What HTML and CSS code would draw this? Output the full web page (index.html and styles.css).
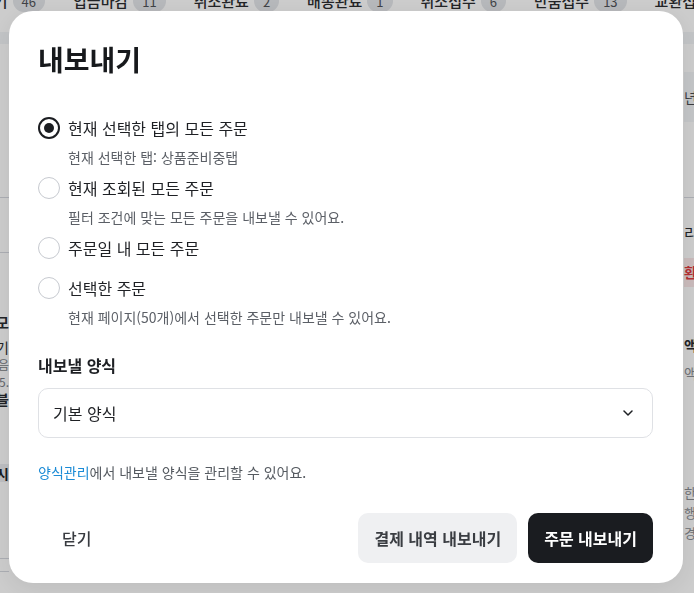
FILE: index.html
```html
<!DOCTYPE html>
<html lang="ko">
<head>
<meta charset="utf-8">
<title>내보내기</title>
<link rel="stylesheet" href="styles.css">
</head>
<body>
<div class="page">
  <nav class="tabs">
    <div class="tab"><span class="tab-name">대기</span><span class="count">46</span></div>
    <div class="tab"><span class="tab-name">입금마감</span><span class="count">11</span></div>
    <div class="tab"><span class="tab-name">취소완료</span><span class="count">2</span></div>
    <div class="tab"><span class="tab-name">배송완료</span><span class="count">1</span></div>
    <div class="tab"><span class="tab-name">취소접수</span><span class="count">6</span></div>
    <div class="tab"><span class="tab-name">반품접수</span><span class="count">13</span></div>
    <div class="tab"><span class="tab-name">교환접수</span><span class="count">3</span></div>
  </nav>
  <div class="toolbar"></div>
  <div class="layout">
    <aside class="side side-left">
      <div class="row row-a"></div>
      <div class="row row-b"></div>
      <div class="left-lines">
        <div class="l-text l-bold">모</div>
        <div class="l-text l-big">기</div>
        <div class="l-text l-gray">음</div>
        <div class="l-text l-gray">25.</div>
        <div class="l-text l-dark">블</div>
      </div>
      <div class="l-band">시</div>
      <div class="l-rule l-rule-1"></div>
      <div class="l-rule l-rule-2"></div>
    </aside>
    <main class="center"></main>
    <aside class="side side-right">
      <div class="r-row r-top"></div>
      <div class="r-row r-band">년도</div>
      <div class="r-row r-plain"></div>
      <div class="r-row r-gap"></div>
      <div class="r-row r-text">리</div>
      <div class="r-row r-pink">환</div>
      <div class="r-row r-space"></div>
      <div class="r-row r-bold">액</div>
      <div class="r-row r-soft">액</div>
      <div class="r-row r-space2"></div>
      <div class="r-row r-small">한</div>
      <div class="r-row r-small">행</div>
      <div class="r-row r-small">경</div>
      <div class="r-row r-bottom"></div>
    </aside>
  </div>
</div>

<div class="overlay">
  <section class="modal" role="dialog" aria-labelledby="modal-title">
    <h1 class="modal-title" id="modal-title">내보내기</h1>

    <div class="options">
      <div class="option">
        <div class="option-row"><span class="radio radio-checked"></span><span class="option-label">현재 선택한 탭의 모든 주문</span></div>
        <div class="option-desc">현재 선택한 탭: 상품준비중탭</div>
      </div>
      <div class="option">
        <div class="option-row"><span class="radio"></span><span class="option-label">현재 조회된 모든 주문</span></div>
        <div class="option-desc">필터 조건에 맞는 모든 주문을 내보낼 수 있어요.</div>
      </div>
      <div class="option">
        <div class="option-row"><span class="radio"></span><span class="option-label">주문일 내 모든 주문</span></div>
      </div>
      <div class="option">
        <div class="option-row"><span class="radio"></span><span class="option-label">선택한 주문</span></div>
        <div class="option-desc">현재 페이지(50개)에서 선택한 주문만 내보낼 수 있어요.</div>
      </div>
    </div>

    <div class="field-label">내보낼 양식</div>
    <div class="select">
      <span class="select-value">기본 양식</span>
      <svg class="chevron" width="10" height="6" viewBox="0 0 10 6" aria-hidden="true"><path d="M1 1 L5 5 L9 1" fill="none" stroke="#1e2024" stroke-width="1.5" stroke-linecap="round" stroke-linejoin="round"/></svg>
    </div>
    <p class="help"><a class="link">양식관리</a>에서 내보낼 양식을 관리할 수 있어요.</p>

    <div class="footer">
      <button class="btn btn-ghost" type="button">닫기</button>
      <div class="footer-actions">
        <button class="btn btn-secondary" type="button">결제 내역 내보내기</button>
        <button class="btn btn-primary" type="button">주문 내보내기</button>
      </div>
    </div>
  </section>
</div>
</body>
</html>
```

FILE: styles.css
```css
html, body {
  margin: 0;
  padding: 0;
  overflow: hidden;
}

body {
  width: 694px;
  height: 593px;
  font-family: "Noto Sans CJK KR", "Noto Sans", sans-serif;
  background: #ffffff;
  color: #1e2024;
}

/* ---------- background page ---------- */
.page {
  width: 694px;
  height: 593px;
  overflow: hidden;
  background: #ffffff;
}

.tabs {
  display: flex;
  align-items: center;
  gap: 28px;
  height: 44px;
  margin-top: -21px;
  margin-left: -20px;
  white-space: nowrap;
}

.tab {
  display: flex;
  align-items: center;
  gap: 5px;
  flex: none;
}

.tab-name {
  font-size: 15px;
  line-height: 22px;
  font-weight: 500;
  color: #2b2d30;
}

.count {
  display: inline-flex;
  align-items: center;
  justify-content: center;
  height: 22px;
  padding: 0 9px;
  border-radius: 11px;
  background: #e4e6ea;
  font-size: 13px;
  color: #505358;
}

.toolbar {
  height: 12px;
  margin-top: 9px;
  background: #f3f5f8;
}

.layout {
  display: grid;
  grid-template-columns: 40px 1fr 60px;
  margin-left: -31px;
  margin-right: -49px;
}

.side {
  overflow: hidden;
  white-space: nowrap;
}

.side-left {
  text-align: right;
}

.row-a {
  height: 153px;
  border-bottom: 1px solid #d6d9e0;
}

.row-b {
  height: 54px;
  border-bottom: 1px solid #d6d9e0;
}

.left-lines {
  padding-top: 61px;
}

.l-text {
  font-size: 14px;
  line-height: 17px;
  color: #2a2c30;
}

.l-bold { font-weight: 700; }
.l-big { margin-top: 8px; }
.l-gray { font-size: 12px; color: #7b7f86; }
.l-dark { margin-top: 1px; font-weight: 700; }

.l-band {
  margin-top: 56px;
  height: 18px;
  line-height: 18px;
  font-size: 14px;
  font-weight: 700;
  background: #eceef1;
  color: #222428;
}

.l-rule {
  height: 1px;
  background: #d6d9e0;
}

.l-rule-1 { margin-top: 76px; }
.l-rule-2 { margin-top: 12px; }

.side-right {
  padding-left: 1px;
}

.r-row {
  font-size: 14px;
  color: #3a3d42;
}

.r-top { height: 28px; }

.r-band {
  height: 50px;
  line-height: 50px;
  background: #f4f6f9;
  color: #4a4d52;
}

.r-plain {
  height: 75px;
  border-bottom: 1px solid #d6d9e0;
}

.r-gap { height: 10px; }

.r-text {
  height: 50px;
  line-height: 50px;
  font-size: 15px;
  color: #2a2c30;
}

.r-pink {
  height: 29px;
  line-height: 29px;
  background: #fbe9ea;
  color: #e03a3e;
  font-weight: 700;
}

.r-space { height: 44px; }

.r-bold {
  height: 28px;
  line-height: 28px;
  font-weight: 700;
  color: #2a2c30;
}

.r-soft {
  height: 28px;
  line-height: 28px;
  color: #8a8e94;
}

.r-space2 { height: 96px; }

.r-small {
  height: 20px;
  line-height: 20px;
  font-size: 13px;
  color: #8a8e94;
}

.r-bottom {
  height: 24px;
}

/* ---------- overlay & modal ---------- */
.overlay {
  position: fixed;
  inset: 0;
  background: rgba(0, 0, 0, 0.2);
  display: flex;
  align-items: flex-start;
  justify-content: flex-start;
  padding: 11px 0 0 9px;
}

.modal {
  box-sizing: border-box;
  width: 674px;
  height: 572px;
  padding: 30px 30px 20px 29px;
  background: #ffffff;
  border-radius: 24px;
  box-shadow: 0 6px 24px rgba(0, 0, 0, 0.08);
  display: flex;
  flex-direction: column;
}

.modal-title {
  margin: 0;
  font-size: 28px;
  line-height: 36px;
  font-weight: 700;
  color: #17191c;
}

.options {
  margin-top: 33px;
  display: flex;
  flex-direction: column;
  gap: 4px;
}

.option {
  display: flex;
  flex-direction: column;
}

.option-row {
  display: flex;
  align-items: center;
  gap: 8px;
  height: 36px;
}

.radio {
  box-sizing: border-box;
  flex: none;
  width: 22px;
  height: 22px;
  border: 1px solid #c7cad0;
  border-radius: 50%;
  background: #ffffff;
}

.radio-checked {
  border: 2px solid #1b1d21;
  display: grid;
  place-items: center;
}

.radio-checked::after {
  content: "";
  width: 10px;
  height: 10px;
  border-radius: 50%;
  background: #1b1d21;
}

.option-label {
  font-size: 16px;
  line-height: 22px;
  color: #1e2024;
}

.option-desc {
  margin-top: 2px;
  padding-left: 30px;
  font-size: 14px;
  line-height: 18px;
  color: #5b5f66;
}

.field-label {
  margin-top: 28px;
  font-size: 16px;
  line-height: 22px;
  font-weight: 700;
  color: #1e2024;
}

.select {
  box-sizing: border-box;
  margin-top: 12px;
  height: 50px;
  border: 1px solid #dfe1e5;
  border-radius: 10px;
  padding: 0 19px 0 14px;
  display: flex;
  align-items: center;
  justify-content: space-between;
}

.select-value {
  font-size: 16px;
  line-height: 22px;
  color: #1e2024;
}

.chevron {
  display: block;
  flex: none;
}

.help {
  margin: 25px 0 0;
  font-size: 14px;
  line-height: 18px;
  color: #555a60;
}

.link {
  color: #1b8bd6;
  text-decoration: none;
}

.footer {
  margin-top: auto;
  display: flex;
  align-items: center;
  justify-content: space-between;
}

.footer-actions {
  display: flex;
  gap: 11px;
}

.btn {
  height: 50px;
  border: 0;
  border-radius: 10px;
  padding: 0 16px;
  font-family: inherit;
  font-size: 16px;
  font-weight: 700;
  line-height: 22px;
  cursor: pointer;
}

.btn-ghost {
  background: transparent;
  color: #383b40;
  padding: 0 24px;
  font-weight: 500;
}

.btn-secondary {
  background: #eff0f2;
  color: #3a3d42;
}

.btn-primary {
  background: #1a1c20;
  color: #ffffff;
}
```
